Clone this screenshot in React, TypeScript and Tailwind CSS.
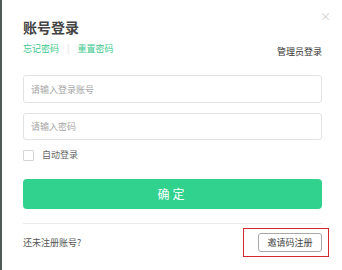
export default function App() {
  return (
    <div
      className="w-[342px] h-[270px] bg-white flex overflow-hidden"
      style={{ fontFamily: '"Noto Sans CJK SC", "Liberation Sans", sans-serif' }}
    >
      {/* dark edge of the page behind the dialog */}
      <div className="w-[2px] bg-[#4f5a54]" />

      <div className="relative flex-1 flex flex-col pl-[21px] pr-[20px]">
        {/* close */}
        <button className="absolute top-[11px] right-[11px] text-[#bdbdbd] text-[11px] leading-[11px] font-extralight">
          ×
        </button>

        {/* header */}
        <div className="flex items-end justify-between pt-[18px]">
          <div className="flex flex-col">
            <h1 className="text-[14px] leading-[18px] font-bold text-[#444]">账号登录</h1>
            <div className="flex items-center mt-[7px] text-[9px] leading-[12px] text-[#3cc88c]">
              <span>忘记密码</span>
              <span className="mx-[8px] text-[#ddd]">|</span>
              <span>重置密码</span>
            </div>
          </div>
          <span className="text-[9px] leading-[12px] text-[#333] mb-[-3px]">管理员登录</span>
        </div>

        {/* inputs */}
        <div className="flex flex-col gap-[10px] mt-[20px]">
          <input
            className="h-[28px] w-full border border-[#e3e3e3] rounded-[3px] px-[7px] text-[9px] outline-none placeholder:text-[#a5a5a5]"
            placeholder="请输入登录账号"
          />
          <input
            className="h-[27px] w-full border border-[#e3e3e3] rounded-[3px] px-[7px] text-[9px] outline-none placeholder:text-[#a5a5a5]"
            placeholder="请输入密码"
          />
        </div>

        <label className="flex items-center gap-[8px] mt-[9px] text-[9px] leading-[12px] text-[#666]">
          <span className="w-[11px] h-[11px] border border-[#d5d5d5] rounded-[1px] bg-white" />
          自动登录
        </label>

        <button className="mt-[18px] h-[30px] w-full rounded-[4px] bg-[#30d28e] text-white text-[12px] tracking-[3px]">
          确定
        </button>

        <div className="mt-[14px] border-t border-[#ececec]" />

        <div className="flex items-center justify-between mt-[9px]">
          <span className="text-[9px] leading-[12px] text-[#555]">还未注册账号?</span>
          <button className="h-[19px] w-[64px] border border-[#a9a9a9] rounded-[3px] text-[9px] text-[#444] bg-white">
            邀请码注册
          </button>
        </div>

        {/* highlight annotation */}
        <div className="absolute left-[241px] top-[228px] w-[86px] h-[29px] border-[1.5px] border-[#d8262f]" />
      </div>
    </div>
  );
}
